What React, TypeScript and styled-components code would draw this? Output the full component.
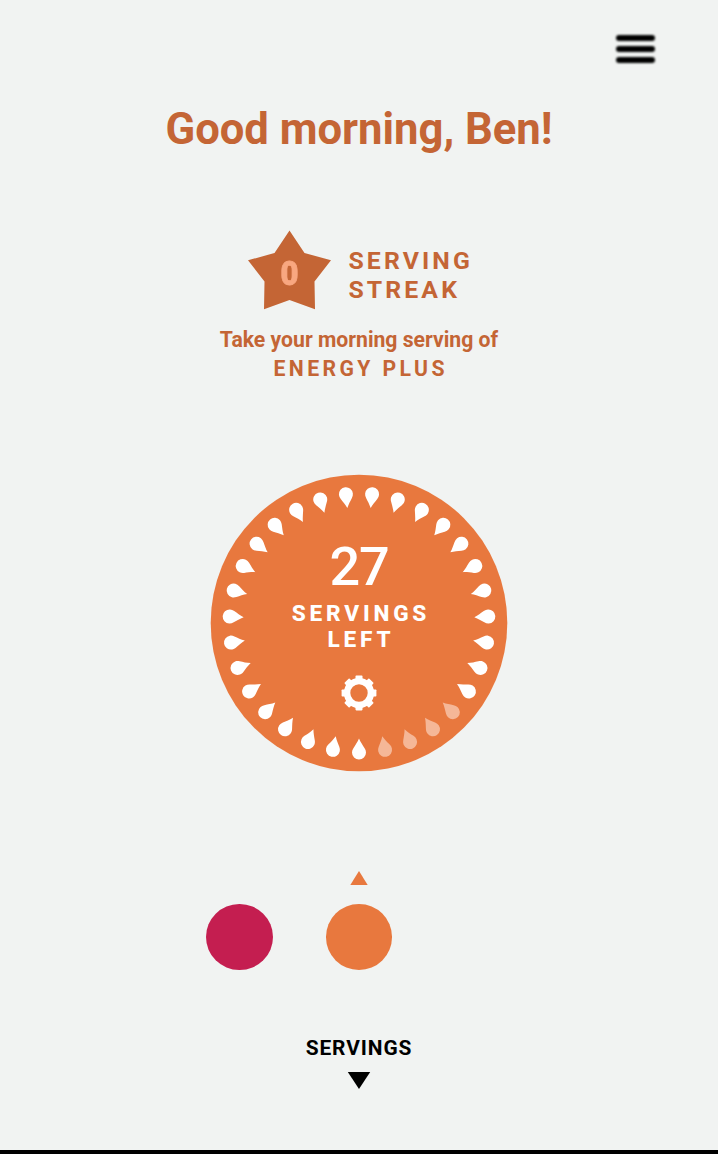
import React from 'react';
import styled, { createGlobalStyle } from 'styled-components';

const rust = '#c46535';
const orange = '#e8783e';

const GlobalStyle = createGlobalStyle`
  *, *::before, *::after { box-sizing: border-box; }
  body { margin: 0; background: #f1f3f2; font-family: Roboto, sans-serif; }
`;

const Screen = styled.main`
  display: flex;
  flex-direction: column;
  align-items: center;
  width: 718px;
  height: 1154px;
  overflow: hidden;
  background: #f1f3f2;
  border-bottom: 4px solid #000;
`;

const TopBar = styled.header`
  display: flex;
  justify-content: flex-end;
  width: 100%;
  height: 66px;
  padding: 35px 63px 0 0;
`;

const MenuButton = styled.button`
  display: flex;
  flex-direction: column;
  gap: 5px;
  width: 39px;
  height: 28px;
  padding: 0;
  border: 0;
  background: none;
`;

const MenuBar = styled.span`
  width: 39px;
  height: 6px;
  border-radius: 3px;
  background: #000;
  filter: blur(0.9px);
`;

const Greeting = styled.h1`
  margin: 38px 0 0;
  font-size: 43.6px;
  line-height: 52px;
  font-weight: 700;
  color: ${rust};
  white-space: nowrap;
`;

const Streak = styled.section`
  display: flex;
  gap: 17.5px;
  width: 222px;
  height: 80px;
  margin-top: 74px;
`;

const StarBadge = styled.div`
  display: grid;
  flex: none;
  width: 83px;
  height: 80px;
  > * { grid-area: 1 / 1; }
`;

const StarCount = styled.span`
  place-self: center;
  margin-top: 7px;
  font-size: 33px;
  line-height: 34px;
  font-weight: 900;
  color: #f8a780;
  -webkit-text-stroke: 0.8px #f8a780;
  transform: scaleX(0.94);
  z-index: 1;
`;

const StreakLabel = styled.div`
  padding-top: 17px;
  font-size: 24.8px;
  line-height: 28.5px;
  font-weight: 700;
  letter-spacing: 3.1px;
  color: ${rust};
  white-space: nowrap;
`;

const Reminder = styled.p<{ $spacing: number }>`
  margin: 0;
  padding-left: ${(p) => p.$spacing}px;
  font-size: 21.2px;
  line-height: 28.5px;
  font-weight: 700;
  letter-spacing: ${(p) => p.$spacing}px;
  color: ${rust};
  white-space: nowrap;
`;

const ReminderBlock = styled.section`
  height: 56px;
  margin-top: 16px;
  text-align: center;
`;

const Dial = styled.section`
  display: grid;
  flex: none;
  width: 298px;
  height: 298px;
  margin-top: 92px;
  > * { grid-area: 1 / 1; }
`;

const DialContent = styled.div`
  display: flex;
  flex-direction: column;
  align-items: center;
  z-index: 1;
  padding-top: 59px;
  color: #fff;
`;

const Remaining = styled.div`
  font-size: 54px;
  line-height: 67px;
  font-weight: 500;
  letter-spacing: -1.2px;
`;

const RemainingLabel = styled.div`
  padding-left: 4px;
  margin-top: 0.5px;
  font-size: 22.6px;
  line-height: 26px;
  font-weight: 800;
  letter-spacing: 3.8px;
  text-align: center;
`;

const Gear = styled.svg`
  margin-top: 22.5px;
`;

const Products = styled.nav`
  display: flex;
  align-items: flex-end;
  gap: 53px;
  width: 305.5px;
  height: 100px;
  margin-top: 98px;
`;

const Product = styled.div`
  display: flex;
  flex-direction: column;
  align-items: center;
  gap: 19.5px;
`;

const Swatch = styled.button<{ $color: string }>`
  width: 66.5px;
  height: 66px;
  padding: 0;
  border: 0;
  border-radius: 50%;
  background: ${(p) => p.$color};
`;

const More = styled.footer`
  display: flex;
  flex-direction: column;
  align-items: center;
  gap: 11px;
  margin-top: 65px;
  font-size: 20.9px;
  line-height: 26px;
  font-weight: 700;
  letter-spacing: 0.9px;
  color: #000;
`;

const TOTAL = 31;
const TAKEN = 4;
const drops = Array.from({ length: TOTAL }, (_, i) => ({
  angle: (-360 / TOTAL) * i,
  faded: i > 0 && i <= TAKEN,
}));

const teeth = [0, 45, 90, 135, 180, 225, 270, 315];

export default function App() {
  return (
    <>
      <GlobalStyle />
      <Screen>
        <TopBar>
          <MenuButton aria-label="Menu">
            <MenuBar />
            <MenuBar />
            <MenuBar />
          </MenuButton>
        </TopBar>
        <Greeting>Good morning, Ben!</Greeting>
        <Streak>
          <StarBadge>
            <svg width="83" height="80" viewBox="0 0 83 80">
              <path
                fill={rust}
                d="M41.5 .5 56.5 23 83 30.3 66.5 51.5 67 79.3 41.5 70 16 79.3 16.5 51.5 0 30.3 26.5 23Z"
              />
            </svg>
            <StarCount>0</StarCount>
          </StarBadge>
          <StreakLabel>
            SERVING
            <br />
            STREAK
          </StreakLabel>
        </Streak>
        <ReminderBlock>
          <Reminder $spacing={0}>Take your morning serving of</Reminder>
          <Reminder $spacing={3.4}>ENERGY PLUS</Reminder>
        </ReminderBlock>
        <Dial>
          <svg width="298" height="298" viewBox="-149 -149 298 298">
            <circle r="148.3" fill={orange} />
            {drops.map((d) => (
              <path
                key={d.angle}
                transform={`rotate(${d.angle})`}
                fill={d.faded ? '#f5b797' : '#fff'}
                d="M0 115.5C1.6 119.3 3.7 122.1 5.6 125.2C6.5 126.6 7 128 7 129.5A7 7 0 0 1-7 129.5C-7 128-6.5 126.6-5.6 125.2C-3.7 122.1-1.6 119.3 0 115.5Z"
              />
            ))}
          </svg>
          <DialContent>
            <Remaining>27</Remaining>
            <RemainingLabel>
              SERVINGS
              <br />
              LEFT
            </RemainingLabel>
            <Gear width="36" height="36" viewBox="-18 -18 36 36">
              <circle r="11.9" fill="none" stroke="#fff" strokeWidth="6.4" />
              {teeth.map((a) => (
                <rect
                  key={a}
                  x="-3.5"
                  y="-17.4"
                  width="7"
                  height="5"
                  rx="0.8"
                  fill="#fff"
                  transform={`rotate(${a})`}
                />
              ))}
            </Gear>
          </DialContent>
        </Dial>
        <Products>
          <Product>
            <Swatch $color="#c41e50" aria-label="Berry product" />
          </Product>
          <Product>
            <svg width="18" height="14" viewBox="0 0 18 14">
              <path fill={orange} d="M9 0 17.7 14H.3Z" />
            </svg>
            <Swatch $color={orange} aria-label="Energy Plus" />
          </Product>
        </Products>
        <More>
          SERVINGS
          <svg width="24" height="18" viewBox="0 0 24 18">
            <path d="M.8 0H23.2L12 17Z" />
          </svg>
        </More>
      </Screen>
    </>
  );
}
